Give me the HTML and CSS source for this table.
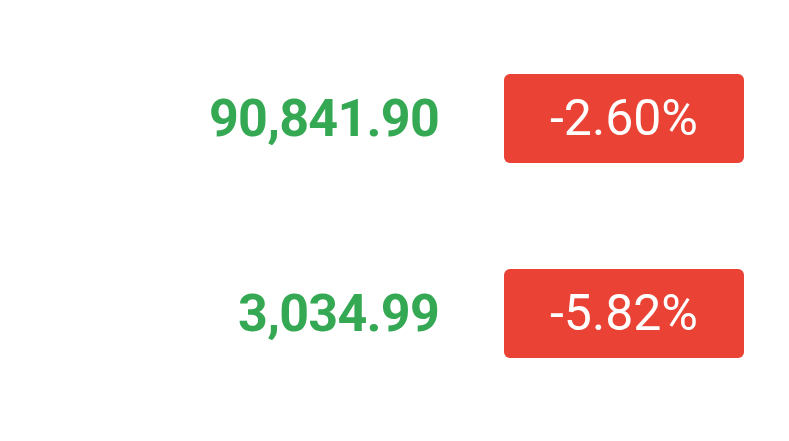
FILE: index.html
```html
<!DOCTYPE html>
<html>
<head>
<meta charset="utf-8">
<link rel="stylesheet" href="styles.css">
</head>
<body>
<div class="board">
  <div class="row">
    <div class="price">90,841.90</div>
    <div class="badge">-2.60%</div>
  </div>
  <div class="row">
    <div class="price">3,034.99</div>
    <div class="badge">-5.82%</div>
  </div>
</div>
</body>
</html>
```
FILE: styles.css
```css
html, body {
  margin: 0;
  padding: 0;
  background: #ffffff;
}
.board {
  width: 789px;
  height: 441px;
  box-sizing: border-box;
  padding-top: 74px;
  display: flex;
  flex-direction: column;
  gap: 106px;
  font-family: Roboto, "Liberation Sans", sans-serif;
}
.row {
  display: grid;
  grid-template-columns: 439px 240px;
  column-gap: 65px;
  align-items: center;
  height: 89px;
}
.price {
  text-align: right;
  font-weight: 700;
  font-size: 52px;
  color: #34a853;
  letter-spacing: -0.75px;
}
.badge {
  height: 89px;
  border-radius: 6px;
  background: #ea4335;
  color: #ffffff;
  font-size: 50px;
  font-weight: 400;
  display: flex;
  align-items: center;
  justify-content: center;
  padding-bottom: 2px;
  box-sizing: border-box;
}
```
